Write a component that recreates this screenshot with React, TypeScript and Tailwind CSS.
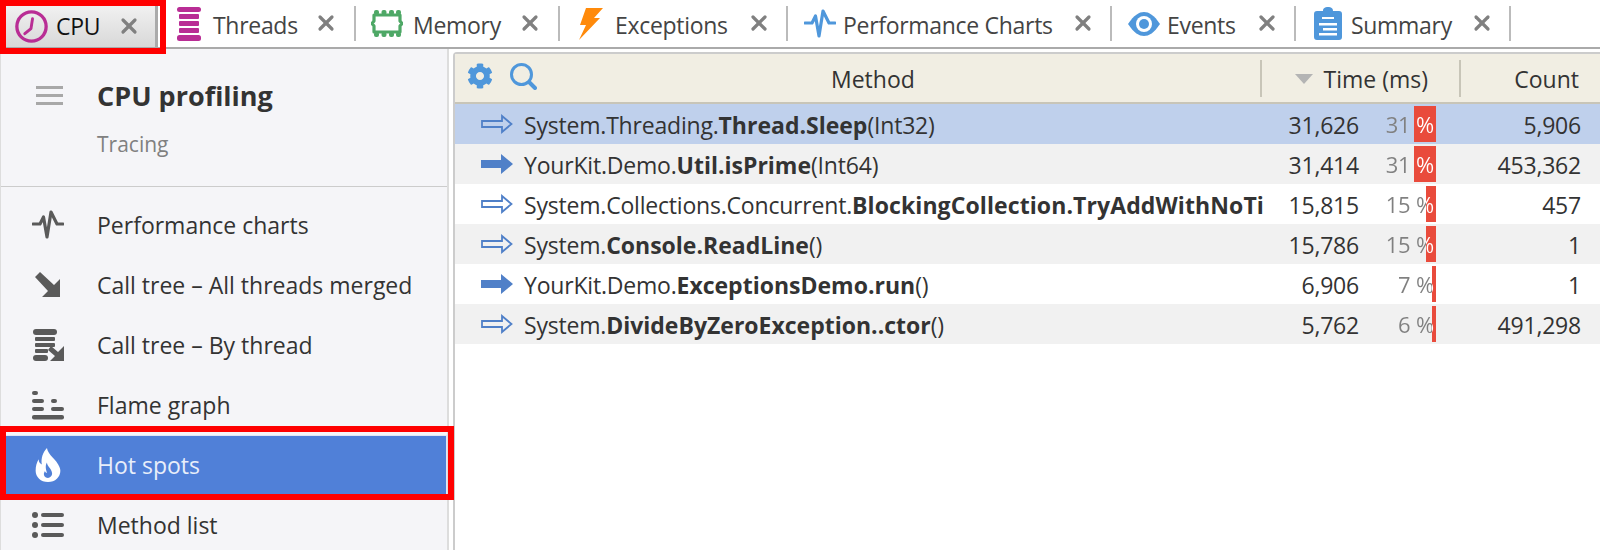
import { FaCog } from "react-icons/fa";
import { X } from "lucide-react";
import type { ReactNode } from "react";

const ClockIcon = () => (
  <svg width="33" height="33" viewBox="0 0 32 32" fill="none" stroke="#b92d95" strokeLinecap="round" strokeLinejoin="round">
    <circle cx="16" cy="16" r="14.2" strokeWidth="3.2" />
    <path d="M17 8.5 L15.5 18 L9.5 23" strokeWidth="2.8" />
  </svg>
);

const ThreadsIcon = () => (
  <svg width="24" height="34" viewBox="0 0 24 34" fill="#b92d95">
    <rect x="0" y="0" width="24" height="5" rx="2.5" />
    <rect x="2" y="7" width="20" height="5" rx="1" />
    <rect x="2" y="14" width="20" height="5" rx="1" />
    <rect x="2" y="21" width="20" height="5" rx="1" />
    <rect x="0" y="28" width="24" height="6" rx="2.5" />
  </svg>
);

const MemoryIcon = () => (
  <svg width="32" height="27" viewBox="0 0 32 27">
    <path
      d="M3 5 H29 V11 L31 13.5 L29 16 V22 H3 V16 L1 13.5 L3 11 Z"
      fill="none"
      stroke="#4ea866"
      strokeWidth="3.2"
      strokeLinejoin="round"
    />
    <g fill="#4ea866">
      <rect x="3" y="0" width="5" height="5" rx="2" />
      <rect x="10.5" y="0" width="5" height="5" rx="2" />
      <rect x="18" y="0" width="5" height="5" rx="2" />
      <rect x="25" y="0" width="5" height="5" rx="2" />
      <rect x="3" y="22" width="5" height="5" rx="2" />
      <rect x="10.5" y="22" width="5" height="5" rx="2" />
      <rect x="18" y="22" width="5" height="5" rx="2" />
      <rect x="25" y="22" width="5" height="5" rx="2" />
    </g>
  </svg>
);

const BoltIcon = () => (
  <svg width="24" height="32" viewBox="0 0 24 32" fill="#ff8a0a">
    <path d="M7 0 L24 0 L15 10 L21 10 L0 32 L7 17 L1 17 Z" />
  </svg>
);

const PulseIcon = ({ color }: { color: string }) => (
  <svg width="32" height="30" viewBox="0 0 32 30" fill="none" stroke={color} strokeWidth="3.2" strokeLinecap="round" strokeLinejoin="round">
    <path d="M1 14 H8 L11.5 7 L15 27 L19 2 L25 14 H31" />
  </svg>
);

const EyeIcon = () => (
  <svg width="32" height="24" viewBox="0 0 32 24">
    <path d="M0 12 C6 3 11 0 16 0 C21 0 26 3 32 12 C26 21 21 24 16 24 C11 24 6 21 0 12 Z" fill="#4f97db" />
    <circle cx="16" cy="12" r="8" fill="#fff" />
    <circle cx="16" cy="12" r="5" fill="#4f97db" />
  </svg>
);

const ClipboardIcon = () => (
  <svg width="28" height="33" viewBox="0 0 28 33">
    <path d="M3 4 H9 C9 1 11 0 14 0 C17 0 19 1 19 4 H25 Q28 4 28 7 V30 Q28 33 25 33 H3 Q0 33 0 30 V7 Q0 4 3 4 Z" fill="#4f97db" />
    <path d="M8 10h12v2H8zM5 16h18v2.4H5zM9 21h14v2.4H9zM5 26h18v2.4H5z" fill="#fff" />
  </svg>
);

const MergedIcon = () => (
  <svg width="26" height="26" viewBox="0 0 26 26" fill="#5a5a5a">
    <path d="M5 0 L19 13 L25 7 V25 H7 L13 19 L0 5 Z" />
  </svg>
);

const ByThreadIcon = () => (
  <svg width="33" height="33" viewBox="0 0 33 33" fill="#5a5a5a">
    <rect x="1" y="0" width="24" height="6" rx="3" />
    <rect x="3" y="8" width="20" height="4" rx="1" />
    <rect x="3" y="14" width="20" height="4" rx="1" />
    <rect x="3" y="20" width="13" height="4" rx="1" />
    <rect x="1" y="26" width="15" height="6" rx="3" />
    <path d="M19 17 L26 23 L32 17 V32 H18 L23 27 L16 21 Z" />
  </svg>
);

const FlameGraphIcon = () => (
  <svg width="32" height="29" viewBox="0 0 32 29" fill="#5a5a5a">
    <rect x="0" y="0" width="6" height="4" rx="2" />
    <rect x="0" y="8" width="12" height="4" rx="2" />
    <rect x="19" y="8" width="6" height="4" rx="2" />
    <rect x="0" y="16" width="12" height="4" rx="2" />
    <rect x="19" y="16" width="13" height="4" rx="2" />
    <rect x="0" y="24" width="32" height="4.5" rx="2" />
  </svg>
);

const FlameIcon = () => (
  <svg width="26" height="34" viewBox="0 0 24 33">
    <path
      d="M11 0 C12 6 17 9 20 13 C23 17 24 20 24 22 C24 28 19 33 12 33 C5 33 0 28 0 22 C0 18 1 14 3 11 C3 14 4 15 6 16 C5 10 7 4 11 0 Z"
      fill="#fff"
    />
    <path
      d="M11 14 C11 18 16 20 16 25 C16 27 14 29 12 29 C9 29 8 27 8 25 C8 24 9 23 9 22 C9 23 10 24 11 24 C10 21 9 17 11 14 Z"
      fill="#5080d8"
    />
  </svg>
);

const ListIcon = () => (
  <svg width="32" height="26" viewBox="0 0 32 26" fill="#5a5a5a">
    <circle cx="3" cy="3" r="3" />
    <circle cx="3" cy="13" r="3" />
    <circle cx="3" cy="23" r="3" />
    <rect x="9" y="1" width="23" height="4" rx="2" />
    <rect x="9" y="11" width="23" height="4" rx="2" />
    <rect x="9" y="21" width="23" height="4" rx="2" />
  </svg>
);

const SearchIcon = () => (
  <svg width="27" height="27" viewBox="0 0 27 27" fill="none" stroke="#4f97db" strokeLinecap="round">
    <circle cx="11.5" cy="11.5" r="10" strokeWidth="3" />
    <path d="M19.5 19.5 L25 25" strokeWidth="4" />
  </svg>
);

const MethodArrow = ({ filled }: { filled: boolean }) => (
  <svg width="32" height="20" viewBox="0 0 32 20">
    {filled ? (
      <path d="M0 6 H20 V0 L32 10 L20 20 V14 H0 Z" fill="#5080c8" />
    ) : (
      <path d="M1 7 H21 V2 L30.5 10 L21 18 V13 H1 Z" fill="none" stroke="#5080c8" strokeWidth="1.8" />
    )}
  </svg>
);

const tabs: { label: string; icon: ReactNode; width: string; box: string; gap: string; closeGap: string }[] = [
  { label: "Threads", icon: <ThreadsIcon />, width: "w-[194px]", box: "pl-[15px] pr-[11px]", gap: "mr-[12px]", closeGap: "mr-[5px]" },
  { label: "Memory", icon: <MemoryIcon />, width: "w-[204px]", box: "pl-[15px] pr-[11px]", gap: "mr-[10px]", closeGap: "mr-[5px]" },
  { label: "Exceptions", icon: <BoltIcon />, width: "w-[228px]", box: "pl-[19px] pr-[13px]", gap: "mr-[12px]", closeGap: "mr-[2px]" },
  { label: "Performance Charts", icon: <PulseIcon color="#4f97db" />, width: "w-[324px]", box: "pl-[16px] pr-[8px]", gap: "mr-[7px]", closeGap: "mr-[7px]" },
  { label: "Events", icon: <EyeIcon />, width: "w-[184px]", box: "pl-[16px] pr-[8px]", gap: "mr-[7px]", closeGap: "mr-[7px]" },
  { label: "Summary", icon: <ClipboardIcon />, width: "w-[215px]", box: "pl-[18px] pr-[10px]", gap: "mr-[9px]", closeGap: "mr-[5px]" },
];

const navItems: { label: string; icon: ReactNode }[] = [
  { label: "Performance charts", icon: <PulseIcon color="#5a5a5a" /> },
  { label: "Call tree – All threads merged", icon: <MergedIcon /> },
  { label: "Call tree – By thread", icon: <ByThreadIcon /> },
  { label: "Flame graph", icon: <FlameGraphIcon /> },
  { label: "Hot spots", icon: <FlameIcon /> },
  { label: "Method list", icon: <ListIcon /> },
];

const rows = [
  { prefix: "System.Threading.", bold: "Thread.Sleep", suffix: "(Int32)", filled: false, time: "31,626", pct: 31, bar: 22, count: "5,906", boldClass: "tracking-normal" },
  { prefix: "YourKit.Demo.", bold: "Util.isPrime", suffix: "(Int64)", filled: true, time: "31,414", pct: 31, bar: 22, count: "453,362", boldClass: "tracking-normal" },
  // the column cuts this one off in the app
  { prefix: "System.Collections.Concurrent.", bold: "BlockingCollection.TryAddWithNoTi", suffix: "", filled: false, time: "15,815", pct: 15, bar: 10, count: "457", boldClass: "tracking-[0.1px]" },
  { prefix: "System.", bold: "Console.ReadLine", suffix: "()", filled: false, time: "15,786", pct: 15, bar: 10, count: "1", boldClass: "tracking-normal" },
  { prefix: "YourKit.Demo.", bold: "ExceptionsDemo.run", suffix: "()", filled: true, time: "6,906", pct: 7, bar: 4, count: "1", boldClass: "tracking-normal" },
  { prefix: "System.", bold: "DivideByZeroException..ctor", suffix: "()", filled: false, time: "5,762", pct: 6, bar: 4, count: "491,298", boldClass: "tracking-normal" },
];

const CloseX = () => <X size={24} strokeWidth={3.2} color="#808080" />;

const App = () => {
  return (
    <div className="w-[1600px] h-[550px] overflow-hidden bg-white text-[#333] text-[23px] font-['Open_Sans',sans-serif]">
      {/* tab strip */}
      <div className="flex h-[49px] border-b-2 border-[#aaa] tracking-[-0.3px]">
        <div className="relative w-[162px] h-[47px] pt-[6px] pl-[6px]">
          <div className="flex items-center h-[41px] w-[152px] bg-gradient-to-b from-[#f1f1f1] to-[#d8d8d8] border-r-[3px] border-[#aaa]">
            <span className="ml-[9px] mr-[8px]"><ClockIcon /></span>
            <span className="text-[#111] w-[54px]">CPU</span>
            <span className="ml-[7px] mb-[2px]"><CloseX /></span>
          </div>
          <div className="absolute left-0 top-0 w-[166px] h-[54px] border-[6px] border-[#f00]" />
        </div>
        {tabs.map((t) => (
          <div key={t.label} className={`flex items-center h-[47px] ${t.width}`}>
            <div className={`flex-1 flex items-center min-w-0 ${t.box}`}>
              <span className={`flex justify-center shrink-0 ${t.gap}`}>{t.icon}</span>
              <span className="whitespace-nowrap text-[#444] pt-[4px]">{t.label}</span>
              <span className={`ml-auto mb-[2px] ${t.closeGap}`}><CloseX /></span>
            </div>
            <div className="w-[2px] h-[35px] bg-[#bbb] shrink-0" />
          </div>
        ))}
      </div>

      <div className="flex">
        {/* side panel */}
        <div className="w-[449px] h-[501px] shrink-0 bg-[#f5f5f8] border-l border-r-2 border-[#ddd]">
          <div className="flex h-[138px] border-b border-[#ccc]">
            <div className="w-[96px] pl-[35px] pt-[37px]">
              <div className="w-[27px] h-[3px] bg-[#a8a8a8]" />
              <div className="w-[27px] h-[3px] bg-[#a8a8a8] mt-[5px]" />
              <div className="w-[27px] h-[3px] bg-[#a8a8a8] mt-[5px]" />
            </div>
            <div className="pt-[27px]">
              <div className="text-[27px] font-bold leading-[40px] text-[#333]">CPU profiling</div>
              <div className="text-[21px] leading-[28px] mt-[14px] text-[#808080]">Tracing</div>
            </div>
          </div>
          <div className="pt-[8px]">
            {navItems.map((item) => {
              const active = item.label === "Hot spots";
              return (
                <div key={item.label} className={`relative flex items-center h-[60px] ${active ? "bg-[#5080d8] text-[#e8eefa] outline outline-1 -outline-offset-1 outline-[#dfe7f7]" : "text-[#333]"}`}>
                  <span className="w-[96px] flex justify-center pr-[2px] shrink-0">{item.icon}</span>
                  <span className="whitespace-nowrap">{item.label}</span>
                  {active && <div className="absolute -left-[1px] -top-[9px] w-[454px] h-[74px] border-[6px] border-[#f00]" />}
                </div>
              );
            })}
          </div>
        </div>

        {/* hot spots table */}
        <div className="flex-1 min-w-0 ml-[4px] mt-[3px] border-t-2 border-l-2 border-[#ccc] rounded-tl-[4px]">
          <div className="flex items-center h-[50px] pt-[2px] bg-[#f1eee3] border-b-2 border-[#c8c5b8]">
            <div className="flex items-center w-[805px] shrink-0">
              <span className="ml-[12px] mr-[17px] mb-[6px]"><FaCog size={26} color="#4f97db" /></span>
              <span className="mb-[6px]"><SearchIcon /></span>
              <span className="ml-[294px]">Method</span>
            </div>
            <div className="w-[2px] h-[37px] mb-[2px] bg-[#c8c5b8] shrink-0" />
            <div className="flex items-center justify-end w-[197px] pr-[31px] shrink-0">
              <span className="w-0 h-0 mr-[11px] border-x-[9px] border-x-transparent border-t-[10px] border-t-[#b4b4b4]" />
              <span>Time (ms)</span>
            </div>
            <div className="w-[2px] h-[37px] mb-[2px] bg-[#c8c5b8] shrink-0" />
            <div className="flex-1 text-right pr-[21px]">Count</div>
          </div>
          {rows.map((r, i) => (
            <div
              key={r.prefix + r.bold}
              className={`flex items-center h-[40px] tracking-[-0.2px] ${i === 0 ? "bg-[#bfd0ec]" : i % 2 === 1 ? "bg-[#f1f1f1]" : "bg-white"}`}
            >
              <div className="flex items-center w-[809px] pl-[26px] shrink-0 whitespace-nowrap">
                <span className="shrink-0 mr-[11px]"><MethodArrow filled={r.filled} /></span>
                <span className="pt-[2px]">{r.prefix}<b className={`font-bold ${r.boldClass}`}>{r.bold}</b>{r.suffix}</span>
              </div>
              <div className="w-[95px] text-right shrink-0 pt-[2px]">{r.time}</div>
              <div className="relative w-[77px] h-full shrink-0 flex items-center justify-end pr-[2px] text-[22px]">
                <div className="absolute right-0 top-[2px] bottom-[2px] bg-[#e94b3c]" style={{ width: r.bar }} />
                <span
                  className="relative bg-clip-text text-transparent whitespace-nowrap"
                  style={{ backgroundImage: `linear-gradient(to left, #fff ${r.bar - 2}px, #808080 ${r.bar - 2}px)` }}
                >
                  {r.pct} %
                </span>
              </div>
              <div className="flex-1 text-right pr-[19px] pt-[2px]">{r.count}</div>
            </div>
          ))}
        </div>
      </div>
    </div>
  );
};

export default App;
